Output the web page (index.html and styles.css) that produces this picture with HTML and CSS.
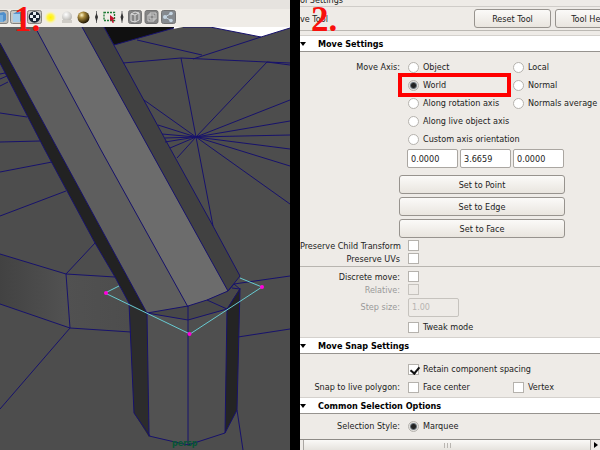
FILE: index.html
```html
<!DOCTYPE html>
<html lang="en">
<head>
<meta charset="utf-8">
<title>Move Tool settings</title>
<link rel="stylesheet" href="styles.css">
</head>
<body>
<main class="screen">
  <section class="scene" aria-label="Perspective view">
    <span class="step">1.</span>
    <div class="toolbar">
      <svg class="icons" width="182" height="16" viewBox="0 9 182 16" aria-hidden="true">
        <defs>
          <radialGradient id="gold" cx=".35" cy=".3" r=".7"><stop offset="0" stop-color="#fff6c8"/><stop offset=".35" stop-color="#a98a3c"/><stop offset="1" stop-color="#241a05"/></radialGradient>
          <radialGradient id="pale" cx=".4" cy=".3" r=".7"><stop offset="0" stop-color="#fff"/><stop offset="1" stop-color="#b5b3ae"/></radialGradient>
          <radialGradient id="sun"><stop offset="0" stop-color="#fff200"/><stop offset=".5" stop-color="#fff34a"/><stop offset="1" stop-color="#fff9b0" stop-opacity="0"/></radialGradient>
        </defs>
        <rect x="-6" y="10.500" width="14" height="13" rx="2" fill="#bdbdb9" stroke="#85837f"/>
        <path d="M-2 13L4 12L6 14V20L3 22H-2Z" fill="#4f8fcb"/><path d="M-2 15H3V22H-2Z" fill="#75aede"/>
        <rect x="10.500" y="10.500" width="14" height="13" rx="2" fill="#c9c9c5" stroke="#85837f"/>
        <path d="M13 14L16 12H23V19L20 22H13Z" fill="#5b95cc"/><path d="M13 14H20V22H13Z" fill="#a6cdea"/>
        <rect x="27.500" y="10.500" width="14" height="13" rx="2" fill="#c4c4c1" stroke="#85837f"/>
        <circle cx="34.500" cy="17" r="5.800" fill="#182330"/>
        <path d="M33 12h3v3h-3zM30 15h3v3h-3zM36 15h3v3h-3zM33 18h3v3h-3z" fill="#e8eef2"/>
        <circle cx="50.500" cy="17.500" r="6.500" fill="url(#sun)"/>
        <circle cx="67" cy="16.500" r="5" fill="url(#pale)"/><path d="M62 20h10v3H62z" fill="#cfccc6"/>
        <circle cx="83.500" cy="17.500" r="6" fill="url(#gold)"/>
        <path d="M96.500 11V23M122 11V23" stroke="#777"/><path d="M96.500 13l1.500 4-1.500 5-1.500-5zM122 13l1.500 4-1.500 5-1.500-5z" fill="#333"/>
        <rect x="104" y="12.500" width="10.500" height="8" fill="none" stroke="#1c7a34" stroke-width="1.300" stroke-dasharray="2 1"/>
        <path d="M110 15l5 4-2 .5 1 3-1.500.5-1-3-1.500 1z" fill="#c3122e"/>
        <rect x="128.500" y="10.500" width="13" height="13" rx="2" fill="#858585" stroke="#747474"/>
        <path d="M131 14l4-2 4 1v7l-4 2-4-1zM131 14l4 1 4-2M135 15v7" fill="none" stroke="#ddd"/>
        <rect x="145" y="10.500" width="13" height="13" rx="2" fill="#858585" stroke="#747474"/>
        <path d="M148 15h6v6h-6zM150 13h6v6h-6z" fill="none" stroke="#cfcfcf"/>
        <rect x="161.500" y="10.500" width="14" height="13" rx="2" fill="#858a8f" stroke="#747474"/>
        <path d="M171 13.500L165 17L171 20.500" fill="none" stroke="#c5d5e2"/><g fill="#c5d5e2"><circle cx="171" cy="13.500" r="1.800"/><circle cx="165" cy="17" r="2"/><circle cx="171" cy="20.500" r="1.800"/></g>
      </svg>
    </div>
    <svg class="viewport" viewBox="0 27 290 423" preserveAspectRatio="xMinYMin slice" role="img" aria-label="Wireframe model">
      <defs>
        <linearGradient id="rim"><stop offset="0" stop-color="#424242"/><stop offset=".5" stop-color="#515151"/><stop offset="1" stop-color="#4d4d4d"/></linearGradient>
      </defs>
      <rect y="27" width="290" height="423" fill="#4d4d4d"/>
      <path d="M0 254L66 274L115 277L130 305V332L70 328L0 304Z" fill="url(#rim)"/>
      <path d="M210 27L261 37L290 28V27ZM173 29L183 27H173Z" fill="#fff"/>
      <path d="M104 27H174V28L114 45Z" fill="#101010"/>
      <path d="M0 63V43L147 313L130 305L115 277L95 243L45 150Z" fill="#222"/>
      <path d="M0 43V27H35L101 150L188 307L147 313Z" fill="#5e5e5e"/>
      <path d="M35 27H82L150 150L228 291L207 300L188 307L101 150Z" fill="#6c6c6c"/>
      <path d="M82 27H104L171 150L213 226L240 276L228 291L150 150Z" fill="#414141"/>
      <path d="M147 313L188 306L207 300L228 291L234 284L240 289L227 309L188 320Z" fill="#484848"/>
      <path d="M129 303L147 313L149 437L134 413Z" fill="#2c2c2c"/>
      <path d="M147 313L188 320V445L150 436Z" fill="#525252"/>
      <path d="M188 320L227 309L225 433L188 445Z" fill="#4f4f4f"/>
      <path d="M240 288L233 299L227 309L225 433L237 410Z" fill="#242424"/>
      <g class="wire">
        <path d="M114 45L174 28M137 40L202 55M193 59L261 37L290 28M183 27H210L261 37M123 63L181 58L267 62L290 63M267 62L290 65M181 58L196 137M267 62L196 137"/>
        <path d="M196 137L290 100M196 137L290 121M196 137L290 135M196 137L290 149M196 137L290 166M196 137L290 204M196 137L213 226M196 137L144 100M196 137L158 125M196 137L162 134M196 137L165 138M196 137L165 142M196 137L170 148M196 137L177 158"/>
        <path d="M0 63L45 150L95 243L115 277L130 305M0 43L147 313M35 27L101 150L188 307M82 27L150 150L228 291M104 27L171 150L213 226L240 276L228 291"/>
        <path d="M147 313L188 306L207 300L228 291M147 313L188 320L227 309L207 300M188 306V445M228 291L234 284L240 289L227 309M232 288L240 289"/>
        <path d="M129 303L134 413L150 436M147 313L149 436L188 445L225 433L237 410L240 288M227 309L225 433M237 410L243 450"/>
        <path d="M0 74L5 73M0 79L7 76M0 86L8 82M0 113L27 117M0 142L40 141M0 172L52 162M0 216L66 191M0 254L66 274L115 277M66 274L95 243M66 274L70 328M0 304L70 328L131 332M70 328L0 409M234 284L290 276M238 337L290 329"/>
      </g>
      <path class="selection" d="M119 286L105 293L190 334L262 287L240 278"/>
      <g fill="#f0d"><circle cx="106" cy="293" r="2"/><circle cx="189.500" cy="334" r="2"/><circle cx="262" cy="287" r="2"/></g>
      <text class="camera" x="172" y="446">persp</text>
    </svg>
  </section>

  <section class="panel" aria-label="Tool settings">
    <span class="step">2.</span>
    <div class="caption">ol Settings</div>
    <header class="head">
      <span class="tool">ve Tool</span>
      <button class="btn">Reset Tool</button>
      <button class="btn help">Tool Help</button>
    </header>
    <form class="settings">
      <h2 class="title">Move Settings</h2>
      <div class="axis">
        <div class="row"><span class="label">Move Axis:</span><label class="choice"><input type="radio" name="axis">Object</label><label class="choice"><input type="radio" name="axis">Local</label></div>
        <div class="row"><span class="marker"></span><span class="label"></span><label class="choice"><input type="radio" name="axis" checked>World</label><label class="choice"><input type="radio" name="axis">Normal</label></div>
        <div class="row"><span class="label"></span><label class="choice"><input type="radio" name="axis">Along rotation axis</label><label class="choice"><input type="radio" name="axis">Normals average</label></div>
        <div class="row"><span class="label"></span><label class="choice"><input type="radio" name="axis">Along live object axis</label></div>
        <div class="row"><span class="label"></span><label class="choice"><input type="radio" name="axis">Custom axis orientation</label></div>
      </div>
      <div class="fields">
        <input class="field" type="text" aria-label="X" value="0.0000">
        <input class="field" type="text" aria-label="Y" value="3.6659">
        <input class="field" type="text" aria-label="Z" value="0.0000">
      </div>
      <div class="actions">
        <button type="button" class="btn">Set to Point</button>
        <button type="button" class="btn">Set to Edge</button>
        <button type="button" class="btn">Set to Face</button>
      </div>
      <div class="checks">
        <div class="row tight"><label class="label" for="child">Preserve Child Transform</label><input id="child" type="checkbox"></div>
        <div class="row tight"><label class="label" for="uvs">Preserve UVs</label><input id="uvs" type="checkbox"></div>
      </div>
      <div class="discrete">
        <div class="row tight"><label class="label" for="discrete">Discrete move:</label><input id="discrete" type="checkbox"></div>
        <div class="row tight off"><label class="label" for="relative">Relative:</label><input id="relative" type="checkbox" disabled></div>
        <div class="row size off"><label class="label" for="size">Step size:</label><input id="size" class="field" type="text" value="1.00" disabled></div>
        <div class="row"><span class="label"></span><label class="choice"><input type="checkbox">Tweak mode</label></div>
      </div>
      <h2 class="title">Move Snap Settings</h2>
      <div class="snap">
        <div class="row"><span class="label"></span><label class="choice"><input type="checkbox" checked>Retain component spacing</label></div>
        <div class="row"><span class="label">Snap to live polygon:</span><label class="choice"><input type="checkbox">Face center</label><label class="choice"><input type="checkbox">Vertex</label></div>
      </div>
      <h2 class="title">Common Selection Options</h2>
      <div class="style">
        <div class="row"><span class="label">Selection Style:</span><label class="choice"><input type="radio" name="style" checked>Marquee</label></div>
        <div class="row"><span class="label"></span><span class="choice nested"><input type="checkbox" disabled></span></div>
      </div>
    </form>
    <div class="scroll"><div class="thumb"><i></i><i></i><i></i></div><div class="arrow"></div></div>
  </section>
</main>
</body>
</html>
```
FILE: styles.css
```css
* { box-sizing: border-box; }

body {
  margin: 0;
  background: #000;
  color: #222;
  font: 9px/12px "DejaVu Sans Condensed", "DejaVu Sans", sans-serif;
}

button, input { font: inherit; color: inherit; margin: 0; }

.screen {
  display: grid;
  grid-template-columns: 29fr 30fr;
  column-gap: 10px;
  height: 100vh;
  overflow: hidden;
}

.scene, .panel {
  position: relative;
  display: flex;
  flex-direction: column;
  min-width: 0;
  min-height: 0;
  overflow: hidden;
}

.step {
  position: absolute;
  top: 0;
  left: 14px;
  z-index: 2;
  color: #f8100c;
  font: bold 35px/40px "Liberation Serif", serif;
}
.panel .step { left: 11px; }

.toolbar {
  flex: none;
  padding-top: 9px;
  height: 27px;
  background: linear-gradient(#e6e3df 9px, #efece7 9px);
}
.icons { display: block; }

.viewport { display: block; flex: 1; width: 100%; min-height: 0; }
.wire { fill: none; stroke: #17126c; stroke-width: 1; }
.selection { fill: none; stroke: #68cbd2; stroke-width: 1; }
.camera { fill: #075535; font: bold 8px "DejaVu Sans", sans-serif; }

.panel { background: #eeebe7; }

.caption { flex: none; height: 7px; line-height: 0; border-bottom: 1px solid #cfccc8; }

.head {
  flex: none;
  display: flex;
  align-items: center;
  gap: 4px;
  height: 24px;
  border-bottom: 1px solid #bbb8b3;
  white-space: nowrap;
}
.tool { flex: 0 0 170px; }

.btn {
  flex: none;
  height: 19px;
  padding: 0;
  border: 1px solid #97938e;
  border-radius: 3px;
  background: linear-gradient(#fbfaf8, #e9e5df);
}
.head .btn { width: 77px; }
.head .help { width: 69px; }

.settings { flex: 1; min-height: 0; overflow: hidden; padding-top: 4px; }

.title {
  display: flex;
  align-items: center;
  gap: 12px;
  height: 17px;
  margin: 0;
  border-top: 1px solid #d4d1cd;
  border-bottom: 1px solid #96938f;
  background: #fff;
  color: #000;
  font-size: 9px;
  white-space: nowrap;
}
.title::before {
  content: "";
  border: 3px solid transparent;
  border-top: 4px solid #000;
  border-bottom: 0;
}

.row {
  position: relative;
  display: grid;
  grid-template-columns: 108px 105px 1fr;
  align-items: center;
  height: 18px;
  white-space: nowrap;
}
.row.tight { height: 13px; }
.row.size { height: 22px; }
.label { padding-right: 8px; text-align: right; }
.choice { display: flex; align-items: center; gap: 4px; }
.nested { padding-left: 15px; }
.off { color: #999; }

.axis { padding-top: 6px; }

input[type="radio"], input[type="checkbox"] {
  appearance: none;
  flex: none;
  width: 11px;
  height: 11px;
  border: 1px solid #b5b2ad;
  background: #fff;
}
input[type="radio"] { border-radius: 50%; }
input[type="radio"]:checked { background: radial-gradient(#222 2px, #667079 3px, #e3e1de 4px); }
input[type="checkbox"]:checked::after {
  content: "";
  display: block;
  width: 4px;
  height: 7px;
  margin-left: 3px;
  border: solid #111;
  border-width: 0 2px 2px 0;
  transform: rotate(40deg);
}
input:disabled { background: #eeebe7; border-color: #c6c3be; }

.marker {
  position: absolute;
  inset: -3px auto -3px 98px;
  width: 113px;
  border: 4px solid #f00;
}

.fields { display: flex; gap: 2px; padding: 1px 0 7px 107px; }
.field {
  width: 51px;
  height: 19px;
  padding: 0 3px;
  border: 1px solid #aaa6a1;
  border-radius: 2px;
  background: #fff;
}
.field:disabled { background: #eeebe7; color: #b8b5b1; }

.actions { display: grid; gap: 3px; width: 166px; margin-left: 99px; }
.checks { padding: 1px 0; border-bottom: 1px solid #b8b5b0; }
.discrete { padding: 3px 0 1px; }
.snap { padding: 6px 0 1px; }
.style { padding-top: 3px; }

.scroll {
  flex: none;
  display: flex;
  height: 11px;
  padding-left: 3px;
  border-top: 1px solid #8d8a86;
}
.thumb {
  flex: 1;
  display: flex;
  justify-content: center;
  align-items: center;
  gap: 2px;
  border: solid #aaa7a2;
  border-width: 0 1px;
  background: linear-gradient(#faf9f7, #e6e3de);
}
.thumb i { width: 1px; height: 5px; background: #b9b6b1; }
.arrow {
  width: 9px;
  display: flex;
  align-items: center;
  justify-content: center;
}
.arrow::before {
  content: "";
  border: 3px solid transparent;
  border-left: 4px solid #000;
  border-right: 0;
}
```
